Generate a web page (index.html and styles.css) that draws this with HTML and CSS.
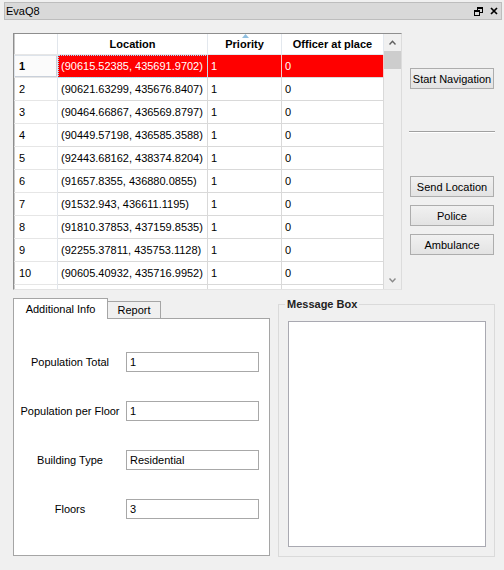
FILE: index.html
```html
<!DOCTYPE html>
<html>
<head>
<meta charset="utf-8">
<link rel="stylesheet" href="styles.css">
</head>
<body>
<div class="titlebar">
  <span class="title">EvaQ8</span>
  <span class="tb-icons">
    <svg class="ico" width="9" height="9" viewBox="0 0 9 9">
      <rect x="3.5" y="0.5" width="5" height="5" fill="none" stroke="#000"/>
      <rect x="3" y="0" width="6" height="2" fill="#000"/>
      <rect x="0.5" y="3.5" width="5" height="5" fill="#d9d9d9" stroke="#000"/>
      <rect x="0" y="3" width="6" height="2" fill="#000"/>
    </svg>
    <svg class="ico" width="8" height="8" viewBox="0 0 8 8">
      <path d="M1 1L7 7M7 1L1 7" stroke="#000" stroke-width="1.7" fill="none"/>
    </svg>
  </span>
</div>
<div class="content">
  <div class="top">
    <div class="table-frame">
      <div class="table-view">
        <div class="row head">
          <div class="cell vh"></div>
          <div class="cell">Location</div>
          <div class="cell sortcol">Priority<svg class="sort" width="7" height="4" viewBox="0 0 7 4"><path d="M0 4L3.5 0L7 4Z" fill="#8fbfe0"/></svg></div>
          <div class="cell">Officer at place</div>
        </div>
        <div class="row sel"><div class="cell vh cur">1</div><div class="cell focus">(90615.52385, 435691.9702)</div><div class="cell">1</div><div class="cell">0</div></div>
        <div class="row"><div class="cell vh">2</div><div class="cell">(90621.63299, 435676.8407)</div><div class="cell">1</div><div class="cell">0</div></div>
        <div class="row"><div class="cell vh">3</div><div class="cell">(90464.66867, 436569.8797)</div><div class="cell">1</div><div class="cell">0</div></div>
        <div class="row"><div class="cell vh">4</div><div class="cell">(90449.57198, 436585.3588)</div><div class="cell">1</div><div class="cell">0</div></div>
        <div class="row"><div class="cell vh">5</div><div class="cell">(92443.68162, 438374.8204)</div><div class="cell">1</div><div class="cell">0</div></div>
        <div class="row"><div class="cell vh">6</div><div class="cell">(91657.8355, 436880.0855)</div><div class="cell">1</div><div class="cell">0</div></div>
        <div class="row"><div class="cell vh">7</div><div class="cell">(91532.943, 436611.1195)</div><div class="cell">1</div><div class="cell">0</div></div>
        <div class="row"><div class="cell vh">8</div><div class="cell">(91810.37853, 437159.8535)</div><div class="cell">1</div><div class="cell">0</div></div>
        <div class="row"><div class="cell vh">9</div><div class="cell">(92255.37811, 435753.1128)</div><div class="cell">1</div><div class="cell">0</div></div>
        <div class="row"><div class="cell vh">10</div><div class="cell">(90605.40932, 435716.9952)</div><div class="cell">1</div><div class="cell">0</div></div>
        <div class="row"><div class="cell vh"></div><div class="cell"></div><div class="cell"></div><div class="cell"></div></div>
      </div>
      <div class="vscroll">
        <div class="sbtn"><svg width="7" height="5" viewBox="0 0 7 5"><path d="M0.5 4.5L3.5 1.2L6.5 4.5" stroke="#5f5f5f" stroke-width="1.4" fill="none"/></svg></div>
        <div class="thumb"></div>
        <div class="track"></div>
        <div class="sbtn"><svg width="7" height="5" viewBox="0 0 7 5"><path d="M0.5 0.5L3.5 3.8L6.5 0.5" stroke="#8a8a8a" stroke-width="1.4" fill="none"/></svg></div>
      </div>
    </div>
    <div class="side">
      <button class="btn first">Start Navigation</button>
      <div class="sep"></div>
      <button class="btn send">Send Location</button>
      <button class="btn next">Police</button>
      <button class="btn next">Ambulance</button>
    </div>
  </div>
  <div class="bottom">
    <div class="tabs">
      <div class="tabbar">
        <div class="tab active">Additional Info</div>
        <div class="tab report">Report</div>
      </div>
      <div class="pane">
        <div class="form">
          <div class="lbl">Population Total</div><div class="field">1</div>
          <div class="lbl">Population per Floor</div><div class="field">1</div>
          <div class="lbl">Building Type</div><div class="field">Residential</div>
          <div class="lbl">Floors</div><div class="field">3</div>
        </div>
      </div>
    </div>
    <fieldset class="msgbox">
      <legend>Message Box</legend>
      <div class="msg-area"></div>
    </fieldset>
  </div>
</div>
</body>
</html>
```
FILE: styles.css
```css
html, body {
  margin: 0;
  padding: 0;
}
body {
  background: #f0f0f0;
  font-family: "Liberation Sans", Arial, sans-serif;
  font-size: 11px;
  color: #000;
  width: 504px;
  height: 570px;
  overflow: hidden;
}
.titlebar {
  margin: 2px 2px 0 4px;
  height: 18px;
  box-sizing: border-box;
  border: 1px solid #bdbdbd;
  background: #d9d9d9;
  display: flex;
  align-items: center;
  justify-content: space-between;
  padding: 0 3px 0 1px;
}
.tb-icons {
  display: flex;
  align-items: center;
  gap: 7px;
}
.ico { display: block; }

.content {
  padding: 13px 0 0 13px;
}
.top {
  display: flex;
  align-items: flex-start;
}
.table-frame {
  width: 389px;
  height: 257px;
  box-sizing: border-box;
  border: 1px solid;
  border-color: #8e8e8e #dcdcdc #e3e3e3 #8e8e8e;
  box-shadow: inset 1px 0 0 #c9c9c9;
  background: #fff;
  display: flex;
}
.table-view {
  width: 370px;
  height: 255px;
  overflow: hidden;
}
.row {
  display: grid;
  grid-template-columns: 44px 150px 74px 102px;
  height: 23px;
}
.cell {
  box-sizing: border-box;
  border-right: 1px solid #d9d9d9;
  border-bottom: 1px solid #d9d9d9;
  padding-left: 3px;
  line-height: 22px;
  white-space: nowrap;
  overflow: hidden;
}
.row.head { height: 21px; }
.head .cell {
  line-height: 20px;
  font-weight: bold;
  text-align: center;
  padding-left: 0;
  border-color: #e3e8ee;
}
.sortcol { position: relative; }
.sort {
  position: absolute;
  left: 34px;
  top: 0;
}
.cell.vh {
  padding-left: 5px;
  border-right-color: #e1e6ec;
  border-bottom-color: #e6e6e6;
}
.cell.vh.cur {
  font-weight: bold;
  box-shadow: inset 1px 1px 0 #dde3ea, inset -1px -1px 0 #c9d0da;
  background: #fbfbfb;
}
.row.sel .cell:not(.vh) {
  background: #ff0000;
  color: #fff;
  border-right-color: #f2c8c8;
}
.row.sel .cell.focus {
  outline: 1px dotted #9fe3ff;
  outline-offset: -1px;
}
.vscroll {
  width: 17px;
  background: #f0f0f0;
  display: flex;
  flex-direction: column;
}
.sbtn {
  height: 17px;
  display: flex;
  align-items: center;
  justify-content: center;
}
.thumb {
  height: 18px;
  background: #cdcdcd;
}
.track { flex: 1; }

.side {
  margin-left: 8px;
  width: 84px;
  display: flex;
  flex-direction: column;
}
.btn {
  width: 84px;
  height: 21px;
  box-sizing: border-box;
  border: 1px solid #adadad;
  background: linear-gradient(#f1f1f1, #e3e3e3);
  font: inherit;
  color: #000;
  padding: 0;
  margin: 0;
}
.btn.first { margin-top: 35px; }
.sep {
  margin: 42px 0 0 -1px;
  width: 86px;
  height: 1px;
  background: #a0a0a0;
  box-shadow: 0 1px 0 #fff;
}
.btn.send { margin-top: 44px; }
.btn.next { margin-top: 8px; }

.bottom {
  display: flex;
  align-items: flex-start;
  margin-top: 8px;
}
.tabs { width: 257px; }
.tabbar {
  display: flex;
  align-items: flex-end;
  height: 20px;
}
.tab {
  box-sizing: border-box;
  border: 1px solid #a5a5a5;
  border-bottom: none;
  text-align: center;
}
.tab.active {
  width: 95px;
  height: 21px;
  line-height: 20px;
  background: #fff;
  margin-bottom: -1px;
  position: relative;
  z-index: 1;
}
.tab.report {
  width: 53px;
  height: 17px;
  line-height: 16px;
  background: #f0f0f0;
  border-left: none;
}
.pane {
  height: 238px;
  box-sizing: border-box;
  border: 1px solid #a5a5a5;
  background: #fff;
  padding-top: 33px;
}
.form {
  display: grid;
  grid-template-columns: 112px 133px;
  grid-auto-rows: 20px;
  row-gap: 29px;
  align-items: center;
}
.lbl { text-align: center; }
.field {
  height: 20px;
  box-sizing: border-box;
  border: 1px solid #a8a8a8;
  background: #fff;
  padding-left: 3px;
  line-height: 18px;
}

.msgbox {
  margin: 0 0 0 8px;
  padding: 0;
  width: 217px;
  box-sizing: border-box;
  border: 1px solid #dadada;
  min-width: 0;
}
.msgbox legend {
  font-weight: bold;
  padding: 0 2px;
  margin-left: 6px;
  line-height: 13px;
  color: #222;
}
.msg-area {
  margin: 10px 8px 9px 9px;
  height: 226px;
  box-sizing: border-box;
  border: 1px solid #a9a9b1;
  background: #fff;
}
```
